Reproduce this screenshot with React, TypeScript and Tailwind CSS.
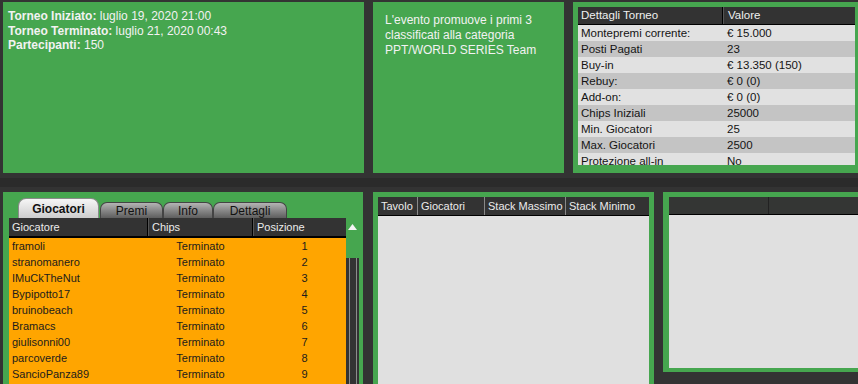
import React from "react";

const G = "bg-[#46a64f]";

const details: [string, string][] = [
  ["Montepremi corrente:", "€ 15.000"],
  ["Posti Pagati", "23"],
  ["Buy-in", "€ 13.350 (150)"],
  ["Rebuy:", "€ 0 (0)"],
  ["Add-on:", "€ 0 (0)"],
  ["Chips Iniziali", "25000"],
  ["Min. Giocatori", "25"],
  ["Max. Giocatori", "2500"],
  ["Protezione all-in", "No"],
];

const players = [
  "framoli",
  "stranomanero",
  "IMuCkTheNut",
  "Bypipotto17",
  "bruinobeach",
  "Bramacs",
  "giulisonni00",
  "parcoverde",
  "SancioPanza89",
];

export default function App() {
  return (
    <div
      className="w-[858px] h-[384px] overflow-hidden bg-[#333333] flex flex-col"
      style={{ fontFamily: '"Liberation Sans", Arial, sans-serif' }}
    >
      {/* top row */}
      <div className="flex h-[171px] mt-[2px] shrink-0">
        <div className={`ml-[3px] w-[361px] ${G} pl-[5px] pt-[7px] text-[12px] leading-[14.5px] text-[#f2f2f2]`}>
          <div>
            <b>Torneo Iniziato:</b> luglio 19, 2020 21:00
          </div>
          <div>
            <b>Torneo Terminato:</b> luglio 21, 2020 00:43
          </div>
          <div>
            <b>Partecipanti:</b> 150
          </div>
        </div>
        <div className={`ml-[9px] w-[191px] ${G} pl-[12px] pt-[11px] text-[12px] leading-[15px] text-[#f2f2f2]`}>
          L'evento promuove i primi 3
          <br />
          classificati alla categoria
          <br />
          PPT/WORLD SERIES Team
        </div>
        <div className={`ml-[9px] w-[285px] ${G} pl-[5px] pr-[3px] pt-[5px] pb-[8px]`}>
          <div className="h-full overflow-hidden bg-[#e1e1e1] text-[11.5px]">
            <div className="flex h-[18px] bg-[#333333] text-[#f0f0f0] border-b border-black">
              <div className="w-[145px] pl-[3px] leading-[17px] border-r border-black">Dettagli Torneo</div>
              <div className="flex-1 pl-[4px] leading-[17px] border-l border-[#555]">Valore</div>
            </div>
            {details.map(([k, v], i) => (
              <div
                key={k}
                className={`flex h-[16px] leading-[16px] text-[#141414] ${i % 2 === 0 ? "bg-[#e1e1e1]" : "bg-[#c4c4c4]"}`}
              >
                <div className="w-[145px] pl-[3px]">{k}</div>
                <div className="flex-1 pl-[4px]">{v}</div>
              </div>
            ))}
          </div>
        </div>
      </div>

      {/* separator */}
      <div className="h-[19px] shrink-0 flex flex-col">
        <div className="h-[5px]" />
        <div className="h-[9px] bg-[#2b2b2b]" />
      </div>

      {/* bottom row */}
      <div className="flex flex-1 min-h-0">
        {/* players panel */}
        <div className={`ml-[3px] w-[360px] ${G} flex flex-col`}>
          <div className="flex items-end pl-[15px] pt-[6px] h-[26px] text-[12px] text-[#111]">
            <div className="w-[81px] h-[20px] rounded-t-[8px] bg-linear-to-b from-[#f6f6f6] to-[#cdcdcd] border border-b-0 border-[#8a8a8a] font-bold text-center leading-[20px]">
              Giocatori
            </div>
            <div className="ml-[1px] w-[63px] h-[16px] rounded-t-[7px] bg-linear-to-b from-[#b4b4b4] to-[#5e5e5e] border border-b-0 border-[#444] text-center leading-[16px]">
              Premi
            </div>
            <div className="w-[50px] h-[16px] rounded-t-[7px] bg-linear-to-b from-[#b4b4b4] to-[#5e5e5e] border border-b-0 border-[#444] text-center leading-[16px]">
              Info
            </div>
            <div className="w-[74px] h-[16px] rounded-t-[7px] bg-linear-to-b from-[#b4b4b4] to-[#5e5e5e] border border-b-0 border-[#444] text-center leading-[16px]">
              Dettagli
            </div>
          </div>
          <div className="flex flex-1 min-h-0 pl-[6px]">
            <div className="w-[337px] flex flex-col text-[11px]">
              <div className="flex h-[20px] bg-[#333333] text-[#ececec] border-b-2 border-black leading-[18px]">
                <div className="w-[139px] pl-[3px] border-r border-black">Giocatore</div>
                <div className="w-[105px] pl-[3px] border-l border-[#555] border-r border-r-black">Chips</div>
                <div className="flex-1 pl-[3px] border-l border-[#555]">Posizione</div>
              </div>
              <div className="flex-1 bg-[#ffa500] text-[#1c1c1c] overflow-hidden">
                {players.map((p, i) => (
                  <div key={p} className="flex h-[16px] leading-[16px]">
                    <div className="w-[139px] pl-[3px]">{p}</div>
                    <div className="w-[105px] text-center">Terminato</div>
                    <div className="flex-1 pl-[10px] text-center">{i + 1}</div>
                  </div>
                ))}
              </div>
            </div>
            {/* scrollbar */}
            <div className="w-[13px] flex flex-col">
              <div className={`h-[40px] ${G} rounded-b-[6px] flex justify-center pt-[6px]`}>
                <svg width="9" height="6" viewBox="0 0 9 6">
                  <polygon points="4.5,0 9,6 0,6" fill="#f4f4f4" />
                </svg>
              </div>
              <div className="flex-1 bg-[#333333] flex pl-[3px]">
                <div className="w-[1px] bg-[#8c8c8c]" />
                <div className="w-[6px]" />
                <div className="w-[1px] bg-[#8c8c8c]" />
              </div>
            </div>
          </div>
        </div>

        {/* tables panel */}
        <div className="ml-[10px] w-[281px] bg-[#46a64f] pl-[5px] pr-[5px] pt-[5px]">
          <div className="h-full bg-[#e0e0e0] text-[11px]">
            <div className="flex h-[19px] bg-[#333333] text-[#ececec] leading-[18px] border-b border-black">
              <div className="w-[40px] pl-[3px] border-r border-[#888]">Tavolo</div>
              <div className="w-[67px] pl-[3px] border-r border-[#888]">Giocatori</div>
              <div className="w-[81px] pl-[3px] border-r border-[#888]">Stack Massimo</div>
              <div className="flex-1 pl-[3px]">Stack Minimo</div>
            </div>
          </div>
        </div>

        {/* third panel */}
        <div className="ml-[9px] flex-1 h-[180px] bg-[#46a64f] pl-[6px] pt-[5px] pb-[4px]">
          <div className="h-full bg-[#e0e0e0]">
            <div className="flex h-[18px] bg-[#343634] border-b border-black">
              <div className="w-[100px] border-r border-[#222]" />
              <div className="flex-1" />
            </div>
          </div>
        </div>
      </div>
    </div>
  );
}
